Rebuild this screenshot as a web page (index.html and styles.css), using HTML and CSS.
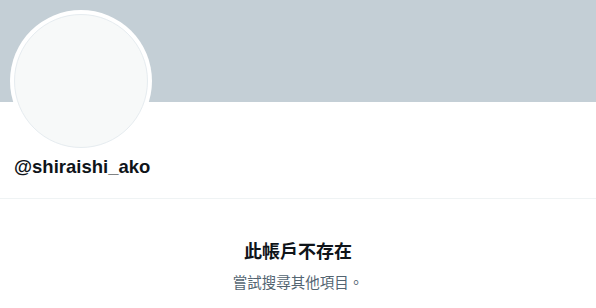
FILE: index.html
```html
<!DOCTYPE html>
<html lang="zh-Hant">
<head>
    <meta charset="UTF-8">
    <title>@shiraishi_ako</title>
    <link rel="stylesheet" href="styles.css">
</head>
<body>
    <div class="profile">
        <div class="banner"></div>
        <div class="profile-head">
            <div class="avatar">
                <div class="avatar-inner"></div>
            </div>
            <div class="username">@shiraishi_ako</div>
        </div>
        <div class="empty-state">
            <h2>此帳戶不存在</h2>
            <p class="hint">嘗試搜尋其他項目。</p>
        </div>
    </div>
</body>
</html>
```

FILE: styles.css
```css
* {
    box-sizing: border-box;
    font-family: 'Liberation Sans', 'Noto Sans CJK TC', sans-serif;
}

body {
    margin: 0;
    background-color: #fff;
    color: #0f1419;
}

.banner {
    height: 102px;
    background-color: #c4cfd6;
}

.profile-head {
    display: flow-root;
    padding: 0 10px;
    border-bottom: 1px solid #eff3f4;
    height: 97px;
}

.avatar {
    width: 142px;
    height: 142px;
    margin-top: -92px;
    padding: 4px;
    border-radius: 50%;
    background-color: #fff;
}

.avatar-inner {
    width: 100%;
    height: 100%;
    border-radius: 50%;
    border: 1px solid #e6ecf0;
    background-color: #f7f9f9;
}

.username {
    margin-top: 3px;
    padding-left: 4px;
    font-size: 18.5px;
    font-weight: 700;
    line-height: 24px;
}

.empty-state {
    text-align: center;
    padding-top: 41px;
}

h2 {
    margin: 0;
    font-size: 18px;
    font-weight: 700;
    line-height: 24px;
}

.hint {
    margin: 9px 0 0;
    font-size: 14.5px;
    line-height: 20px;
    color: #536471;
}
```
